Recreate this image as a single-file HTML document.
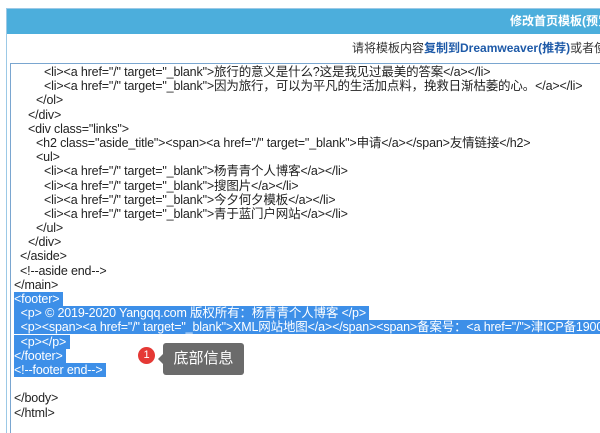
<!DOCTYPE html>
<html><head><meta charset="utf-8"><style>
body{margin:0;width:600px;height:432px;overflow:hidden;background:#fff;font-family:"Liberation Sans","Noto Sans CJK SC",sans-serif;position:relative}
.frame{position:absolute;left:6px;top:8px;width:594px;height:424px;border-left:1px solid #9cc9e6;border-top:1px solid #9cc9e6}
.hdr{position:absolute;left:7px;top:9px;width:593px;height:25px;background:#4caedc;color:#fff;font-weight:bold;font-size:12px;line-height:25px;white-space:nowrap;overflow:hidden}
.hdr span{position:absolute;left:503px}
.sub{position:absolute;left:352px;top:39px;width:248px;overflow:hidden;font-size:12px;color:#333;white-space:nowrap}
.sub b{color:#1e5aa8}
.ta{position:absolute;left:10px;top:63px;width:590px;height:369px;border-left:1px solid #7aa6d0;border-top:1px solid #7aa6d0}
.code{position:absolute;left:0;top:65px;font-size:12.5px;line-height:14.2px;color:#222;letter-spacing:-0.15px;width:600px;height:367px;overflow:hidden}
.code div{height:14.2px;white-space:pre}
.i1{padding-left:14px}.i2{padding-left:20px}.i3{padding-left:28px}.i4{padding-left:36px}.i5{padding-left:44px}
.hl{background:#3d8fe8;color:#fff}
.dot{position:absolute;left:138px;top:347px;width:17px;height:17px;border-radius:50%;background:#e53935;color:#fff;font-size:11px;text-align:center;line-height:17px}
.tip{position:absolute;left:163px;top:343px;width:81px;height:32px;background:#6b6b6b;border-radius:3px;color:#fff;font-size:15px;line-height:32px;text-align:center}
.tip:before{content:"";position:absolute;left:-5px;top:11px;border-top:5px solid transparent;border-bottom:5px solid transparent;border-right:5px solid #6b6b6b}
</style></head><body>
<div class="frame"></div>
<div class="hdr"><span>修改首页模板(预览)</span></div>
<div class="sub">请将模板内容<b>复制到Dreamweaver(推荐)</b>或者使用</div>
<div class="ta"></div>
<div class="code"><div class="i5">&lt;li&gt;&lt;a href="/" target="_blank"&gt;旅行的意义是什么?这是我见过最美的答案&lt;/a&gt;&lt;/li&gt;</div><div class="i5">&lt;li&gt;&lt;a href="/" target="_blank"&gt;因为旅行，可以为平凡的生活加点料，挽救日渐枯萎的心。&lt;/a&gt;&lt;/li&gt;</div><div class="i4">&lt;/ol&gt;</div><div class="i3">&lt;/div&gt;</div><div class="i3">&lt;div class="links"&gt;</div><div class="i4">&lt;h2 class="aside_title"&gt;&lt;span&gt;&lt;a href="/" target="_blank"&gt;申请&lt;/a&gt;&lt;/span&gt;友情链接&lt;/h2&gt;</div><div class="i4">&lt;ul&gt;</div><div class="i5">&lt;li&gt;&lt;a href="/" target="_blank"&gt;杨青青个人博客&lt;/a&gt;&lt;/li&gt;</div><div class="i5">&lt;li&gt;&lt;a href="/" target="_blank"&gt;搜图片&lt;/a&gt;&lt;/li&gt;</div><div class="i5">&lt;li&gt;&lt;a href="/" target="_blank"&gt;今夕何夕模板&lt;/a&gt;&lt;/li&gt;</div><div class="i5">&lt;li&gt;&lt;a href="/" target="_blank"&gt;青于蓝门户网站&lt;/a&gt;&lt;/li&gt;</div><div class="i4">&lt;/ul&gt;</div><div class="i3">&lt;/div&gt;</div><div class="i2">&lt;/aside&gt;</div><div class="i2">&lt;!--aside end--&gt;</div><div class="i1">&lt;/main&gt;</div><div class="i1"><span class="hl">&lt;footer&gt;&nbsp;</span></div><div class="i1"><span class="hl">&nbsp; &lt;p&gt; © 2019-2020 Yangqq.com 版权所有：杨青青个人博客 &lt;/p&gt;&nbsp;</span></div><div class="i1"><span class="hl">&nbsp; &lt;p&gt;&lt;span&gt;&lt;a href="/" target="_blank"&gt;XML网站地图&lt;/a&gt;&lt;/span&gt;&lt;span&gt;备案号：&lt;a href="/"&gt;津ICP备19000000号&lt;/a&gt;</span></div><div class="i1"><span class="hl">&nbsp; &lt;p&gt;&lt;/p&gt;&nbsp;</span></div><div class="i1"><span class="hl">&lt;/footer&gt;&nbsp;</span></div><div class="i1"><span class="hl">&lt;!--footer end--&gt;&nbsp;</span></div><div> </div><div class="i1">&lt;/body&gt;</div><div class="i1">&lt;/html&gt;</div></div>
<div class="dot">1</div>
<div class="tip">底部信息</div>
</body></html>
